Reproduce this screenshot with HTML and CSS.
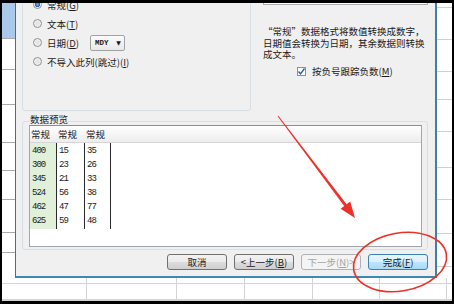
FILE: index.html
```
<!DOCTYPE html>
<html lang="zh-CN">
<head>
    <meta charset="UTF-8">
    <title>文本导入向导 - 第3步</title>
    <link rel="stylesheet" href="styles.css">
</head>
<body>
    <div class="screen">
        <div class="sheet">
            <div class="main">
                <div class="strip strip-left">
                    <div class="cell cell-selected" style="height: 36px"></div>
                    <div class="cell" style="height: 31px"></div>
                    <div class="cell" style="height: 35px"></div>
                    <div class="cell" style="height: 38px"></div>
                    <div class="cell" style="height: 28px"></div>
                    <div class="cell" style="height: 29px"></div>
                    <div class="cell" style="height: 33px"></div>
                    <div class="cell" style="height: 20px"></div>
                </div>

                <div class="dialog">
                    <div class="upper">
                        <div class="format-group">
                            <label class="opt"><span class="radio on"></span><span>常规(<u>G</u>)</span></label>
                            <label class="opt"><span class="radio"></span><span>文本(<u>T</u>)</span></label>
                            <label class="opt"><span class="radio"></span><span>日期(<u>D</u>)</span>
                                <span class="select">MDY<span class="caret">▼</span></span>
                            </label>
                            <label class="opt"><span class="radio"></span><span>不导入此列(跳过)(<u>I</u>)</span></label>
                        </div>

                        <div class="hint">
                            <div class="dest"><span>数据源</span><span class="dest-btn"></span></div>
                            <p>“常规”数据格式将数值转换成数字，<br>日期值会转换为日期，其余数据则转换<br>成文本。</p>
                            <label class="check">
                                <span class="box">
                                    <svg width="9" height="9" viewBox="0 0 9 9"><path d="M1.5 4.5 L3.5 6.8 L7.5 1.5" fill="none" stroke="#2b5fa6" stroke-width="1.4"/></svg>
                                </span><span>按负号跟踪负数(<u>M</u>)</span>
                            </label>
                        </div>
                    </div>

                    <div class="preview-group">
                        <div class="legend">数据预览</div>
                        <div class="preview">
                            <div class="cols head">
                                <span>常规</span>
                                <span>常规</span>
                                <span>常规</span>
                            </div>
                            <div class="cols data">
                                <div class="col col-active">
                                    <span>400</span><span>300</span><span>345</span><span>524</span><span>462</span><span>625</span>
                                </div>
                                <div class="col">
                                    <span>15</span><span>23</span><span>21</span><span>56</span><span>47</span><span>59</span>
                                </div>
                                <div class="col">
                                    <span>35</span><span>26</span><span>33</span><span>38</span><span>77</span><span>48</span>
                                </div>
                            </div>
                        </div>
                    </div>

                    <div class="buttons">
                        <button>取消</button>
                        <button>&lt;上一步(<u>B</u>)</button>
                        <button disabled>下一步(<u>N</u>)&gt;</button>
                        <button class="primary">完成(<u>F</u>)</button>
                    </div>
                </div>

                <div class="strip strip-right">
                    <div class="cell" style="height: 5px"></div>
                    <div class="cell" style="height: 32px"></div>
                    <div class="cell" style="height: 32px"></div>
                    <div class="cell" style="height: 28px"></div>
                    <div class="cell" style="height: 32px"></div>
                    <div class="cell" style="height: 36px"></div>
                    <div class="cell" style="height: 32px"></div>
                    <div class="cell" style="height: 34px"></div>
                    <div class="cell" style="height: 33px"></div>
                </div>
            </div>

            <div class="bottom-strip">
                <div class="gcol" style="width: 85px"></div>
                <div class="gcol" style="width: 90px"></div>
                <div class="gcol" style="width: 68px"></div>
                <div class="gcol" style="width: 68px"></div>
                <div class="gcol" style="width: 67px"></div>
                <div class="gcol" style="width: 67px"></div>
            </div>
        </div>

        <!-- red annotation marks drawn over the screenshot -->
        <svg class="marks" width="454" height="304" viewBox="0 0 454 304">
            <polygon points="277.6,116.3 344.2,206.1 340.6,208.8 355,218 350.2,201.6 346.6,204.3 278.4,115.7" fill="#ec3228"/>
            <ellipse cx="400" cy="262" rx="47" ry="29" transform="rotate(-10 400 262)" fill="none" stroke="#ec3228" stroke-width="1.6"/>
        </svg>
    </div>
</body>
</html>
```

FILE: styles.css
```
* {
    box-sizing: border-box;
}

body {
    margin: 0;
    background: #000;
    font-family: "Noto Sans CJK SC", "DejaVu Sans", sans-serif;
    font-size: 9.5px;
    color: #1a1a1a;
}

.screen {
    position: relative;
    width: 454px;
    height: 304px;
    padding: 3px 2px;
    background: #000;
}

.sheet {
    width: 450px;
    height: 298px;
    background: #fff;
    overflow: hidden;
}

.main {
    display: flex;
    height: 275px;
}

/* spreadsheet cells behind the dialog */
.strip {
    display: flex;
    flex-direction: column;
}

.strip-left {
    width: 13px;
}

.strip-right {
    width: 15px;
}

.cell {
    flex-shrink: 0;
    border-bottom: 1px solid #a9a9a9;
}

.strip-right .cell {
    border-bottom-color: #d0d0d0;
}

.cell-selected {
    background: #a9c8ea;
}

.bottom-strip {
    display: flex;
    height: 23px;
    background: linear-gradient(#fff 5px, #d4d4d4 5px, #d4d4d4 6px, #fff 6px, #fff 21px, #d4d4d4 21px);
}

.gcol {
    border-right: 1px solid #d4d4d4;
    flex-shrink: 0;
}

/* dialog window */
.dialog {
    width: 422px;
    height: 275px;
    padding: 0 7px 0 6px;
    background: #f0f0f0;
    border-left: 1px solid #5d6972;
    border-right: 2px solid #41809f;
    border-bottom: 2px solid #3d89b3;
    overflow: hidden;
}

.upper {
    display: flex;
    margin-top: -15px;
}

.format-group {
    width: 229px;
    height: 123px;
    padding: 6px 0 0 10px;
    border: 1px solid #d5dfe5;
    border-radius: 3px;
}

.opt {
    display: flex;
    align-items: center;
    gap: 5px;
    height: 19px;
}

.radio {
    width: 9px;
    height: 9px;
    border-radius: 50%;
    border: 1px solid #8e8f8f;
    background: radial-gradient(circle, #e4e4e4 30%, #f4f4f4 70%);
}

.radio.on {
    background: radial-gradient(circle, #7fb4ea 0, #2a63ad 45%, #f4f4f4 60%);
}

.select {
    display: flex;
    align-items: center;
    justify-content: space-between;
    width: 35px;
    height: 16px;
    margin-left: 6px;
    padding: 0 3px 0 4px;
    border: 1px solid #a3a3a3;
    border-radius: 2px;
    background: linear-gradient(#fbfbfb, #e9e9e9);
    font-family: "Liberation Mono", monospace;
    font-size: 7.5px;
    font-weight: bold;
}

.caret {
    font-size: 6px;
    font-family: "DejaVu Sans", sans-serif;
}

.hint {
    width: 165px;
    margin-left: 12px;
}

.dest {
    display: flex;
    justify-content: space-between;
    align-items: center;
    height: 16px;
    margin-top: 1px;
    padding: 0 1px 0 8px;
    border: 1px solid #abadb3;
    background: #fff;
    line-height: 14px;
}

.dest-btn {
    width: 12px;
    height: 12px;
    border: 1px solid #8ea4c0;
    border-radius: 2px;
    background: linear-gradient(#eaf3fb, #c5d9ee);
}

.hint p {
    margin: 21px 0 0;
    line-height: 11.5px;
    white-space: nowrap;
}

.check {
    display: flex;
    align-items: center;
    gap: 6px;
    height: 12px;
    margin-top: 4.5px;
    padding-left: 34px;
}

.box {
    display: flex;
    width: 9px;
    height: 9px;
    border: 1px solid #8f8f8f;
    background: #fdfdfd;
}

.box svg {
    margin: -1px;
}

/* data preview */
.preview-group {
    height: 129px;
    margin-top: 10px;
    border: 1px solid #d5dfe5;
    border-radius: 3px;
}

.legend {
    width: fit-content;
    margin: -8px 0 0 7px;
    line-height: 11px;
    background: #f0f0f0;
}

.preview {
    height: 122px;
    margin: 0 5px 0 6px;
    border: 1px solid #a0a6ad;
    border-top-color: #8a8f95;
    background: #fff;
}

.cols {
    display: grid;
    grid-template-columns: 27px 28px 26px;
}

.head {
    height: 17px;
    line-height: 16px;
    border-bottom: 1px solid #d6d6d6;
    background: linear-gradient(#fff, #ededed);
    grid-template-columns: 27px 28px 26px 1fr;
}

.head span {
    padding-left: 1px;
}

.col {
    display: flex;
    flex-direction: column;
    height: 86px;
    padding-top: 1px;
    border-right: 1px solid #2a2a2a;
    font-family: "Liberation Mono", monospace;
    font-size: 9px;
    letter-spacing: -1px;
    line-height: 14px;
}

.col span {
    padding-left: 2px;
}

.col-active {
    background: #e1f0d9;
}

/* dialog buttons */
.buttons {
    display: flex;
    justify-content: flex-end;
    gap: 7px;
    margin-top: 4px;
}

button {
    width: 60px;
    height: 16px;
    padding: 0;
    border: 1px solid #707070;
    border-radius: 3px;
    background: linear-gradient(#f2f2f2, #ebebeb 50%, #dddddd 50%, #cfcfcf);
    font-family: inherit;
    font-size: 9.5px;
    line-height: 14px;
    color: #1a1a1a;
}

button:disabled {
    border-color: #adb2b5;
    background: #f4f4f4;
    color: #a3a3a3;
}

button.primary {
    border-color: #3c7fb1;
    background: linear-gradient(#eaf6fd, #d9f0fc 50%, #bee6fd 50%, #a7d9f5);
}

.marks {
    position: absolute;
    top: 0;
    left: 0;
    pointer-events: none;
}
```
